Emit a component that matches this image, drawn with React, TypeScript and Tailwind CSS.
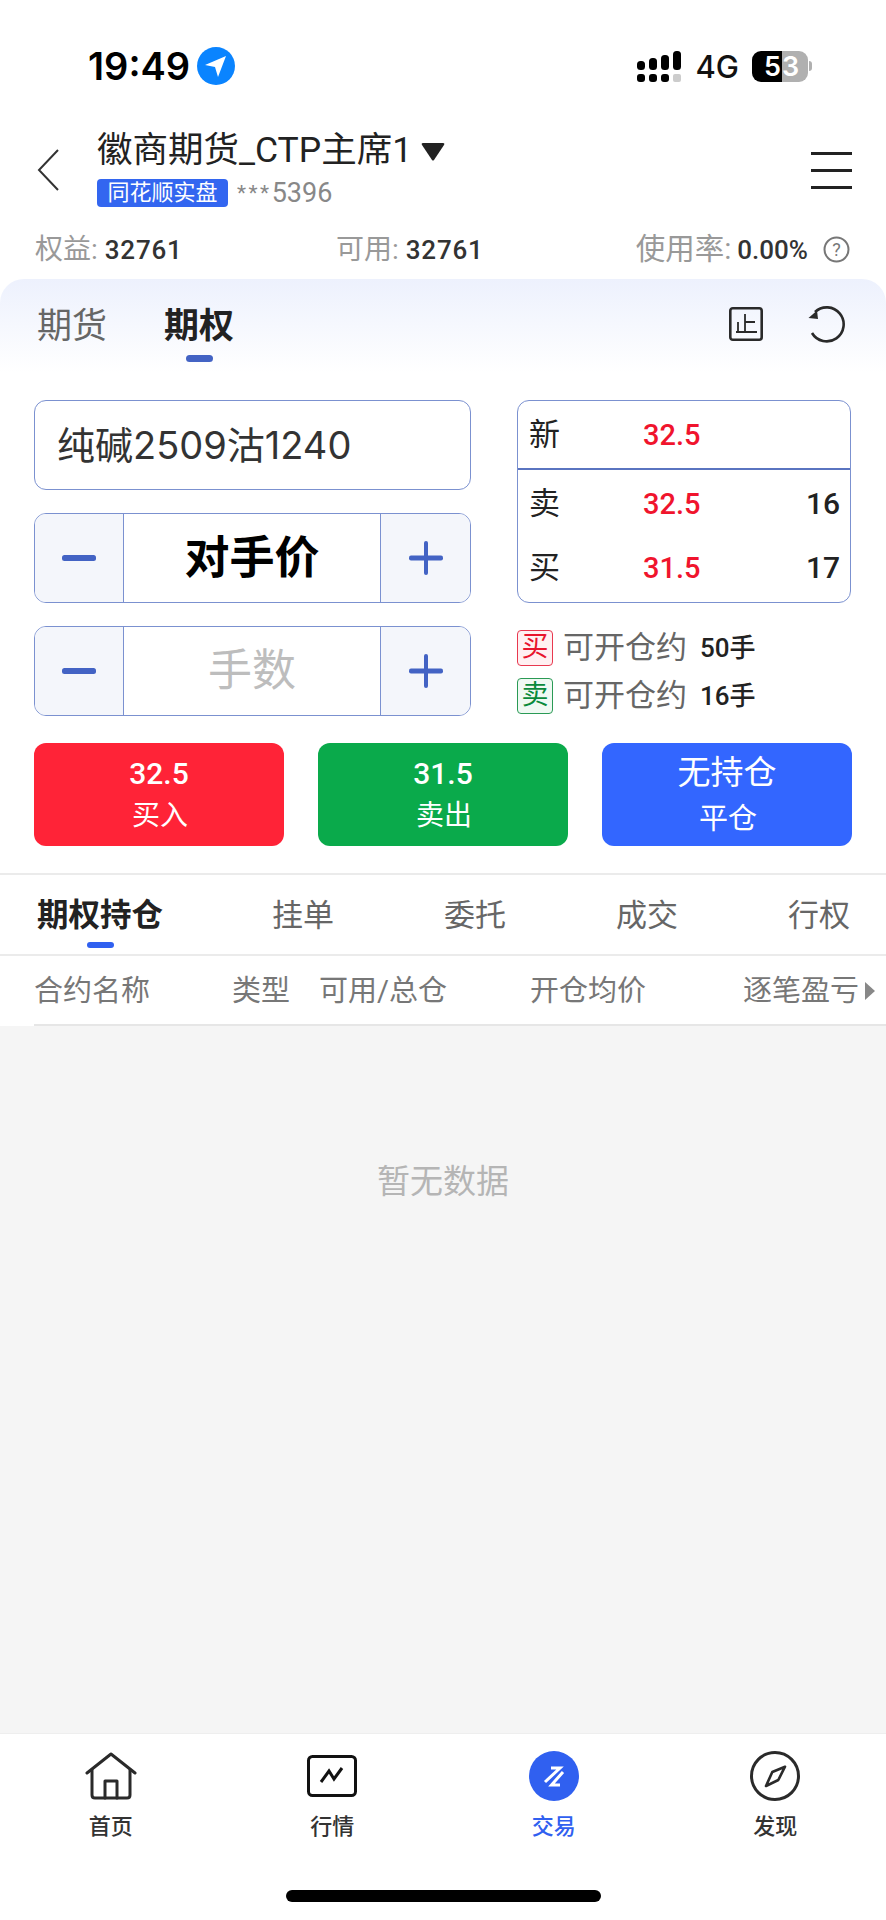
import React from "react";

const Minus = () => (
  <svg width="34" height="6" viewBox="0 0 34 6"><rect width="34" height="6" rx="2.5" fill="#4363c4" /></svg>
);
const Plus = () => (
  <svg width="34" height="34" viewBox="0 0 34 34">
    <rect y="14.5" width="34" height="5" rx="2" fill="#4363c4" />
    <rect x="15" width="4" height="34" rx="2" fill="#4363c4" />
  </svg>
);

function Stepper({ children }: { children: React.ReactNode }) {
  return (
    <div className="flex h-[90px] overflow-hidden rounded-[12px] border border-[#7b91d0]">
      <div className="flex w-[89px] items-center justify-center border-r border-[#7b91d0] bg-[#f4f6fb]"><Minus /></div>
      <div className="flex flex-1 items-center justify-center">{children}</div>
      <div className="flex w-[90px] items-center justify-center border-l border-[#7b91d0] bg-[#f4f6fb]"><Plus /></div>
    </div>
  );
}

function Quote({ label, price, qty }: { label: string; price: string; qty?: string }) {
  return (
    <div className="flex items-center pl-[11px] pr-[10px]">
      <span className="w-[114px] text-[31px] leading-[40px] text-[#222]">{label}</span>
      <span className="flex-1 text-[29px] font-medium leading-[40px] text-[#f0142d]">{price}</span>
      <span className="text-[30px] font-medium leading-[40px] text-[#222]">{qty}</span>
    </div>
  );
}

function Avail({ tag, cls, qty }: { tag: string; cls: string; qty: string }) {
  return (
    <div className="flex h-[37px] items-center">
      <span className={`flex h-[36px] w-[36px] items-center justify-center rounded-[4px] border text-[27px] leading-none ${cls}`}>{tag}</span>
      <span className="ml-[10px] text-[31px] leading-none text-[#666]">可开仓约</span>
      <span className="ml-[13px] text-[26px] font-medium leading-none text-[#222]">{qty}</span>
    </div>
  );
}

function TradeBtn({ top, bottom, cls, large }: { top: string; bottom: string; cls: string; large?: boolean }) {
  return (
    <div className={`flex h-[103px] w-[250px] flex-col items-center justify-center rounded-[12px] text-white ${large ? "gap-[4px]" : ""} ${cls}`}>
      <span className={large ? "text-[33px] leading-[44px]" : "text-[30px] font-medium leading-[42px]"}>{top}</span>
      <span className={large ? "pl-[2px] text-[29px] leading-[40px]" : "pl-[2px] pt-[1px] text-[28px] leading-[40px]"}>{bottom}</span>
    </div>
  );
}

function NavItem({ icon, label, active }: { icon: React.ReactNode; label: string; active?: boolean }) {
  return (
    <div className="flex w-[221.7px] flex-col items-center">
      <div className="flex h-[50px] items-center justify-center">{icon}</div>
      <span className={`mt-[11px] text-[22px] font-medium leading-[30px] ${active ? "text-[#3060f0]" : "text-[#333]"}`}>{label}</span>
    </div>
  );
}

export default function App() {
  return (
    <div className="flex h-[1920px] w-[886px] flex-col overflow-hidden bg-white [font-family:Roboto,'Noto_Sans_CJK_SC',sans-serif]">
      {/* status bar */}
      <div className="flex h-[100px] items-center justify-between pl-[88px] pr-[74px] pt-[32px]">
        <div className="flex items-center gap-[7px]">
          <span className="text-[38px] font-semibold leading-none text-black [font-family:Inter,sans-serif]">19:49</span>
          <svg width="38" height="38" viewBox="0 0 38 38">
            <circle cx="19" cy="19" r="19" fill="#0a84ff" />
            <path d="M29 9 L8 18 L18 20 L21 30 Z" fill="#fff" />
          </svg>
        </div>
        <div className="flex items-center">
          <svg width="44" height="31" viewBox="0 0 44 31">
            <rect x="0" y="10" width="8" height="9" rx="3.5" fill="#000" />
            <rect x="12" y="7" width="8" height="12" rx="3.5" fill="#000" />
            <rect x="24" y="4" width="8" height="15" rx="3.5" fill="#000" />
            <rect x="36" y="0" width="8" height="19" rx="3.5" fill="#000" />
            <rect x="0" y="23" width="8" height="8" rx="3" fill="#000" />
            <rect x="12" y="23" width="8" height="8" rx="3" fill="#000" />
            <rect x="24" y="23" width="8" height="8" rx="3" fill="#000" />
            <rect x="36" y="23" width="8" height="8" rx="2" fill="#ccc" />
          </svg>
          <span className="ml-[14px] text-[31px] font-medium leading-none text-[#111] [font-family:Inter,sans-serif]">4G</span>
          <div className="ml-[13px] flex h-[31px] w-[56px] overflow-hidden rounded-[9px] text-[27px] font-semibold leading-[31px] text-white [font-family:Inter,sans-serif]">
            <span className="w-[30px] bg-black pl-[12px]">5</span>
            <span className="flex-1 bg-[#b0b0b0]">3</span>
          </div>
          <div className="ml-[1px] h-[10px] w-[3px] rounded-r-full bg-[#b0b0b0]" />
        </div>
      </div>

      {/* header */}
      <div className="flex h-[122px] items-center pl-[37px] pr-[34px] pt-[18px]">
        <svg width="22" height="42" viewBox="0 0 22 42" fill="none" stroke="#333" strokeWidth="2">
          <path d="M21 1 L2 21 L21 41" />
        </svg>
        <div className="ml-[38px] flex-1 pb-[5px]">
          <div className="flex items-center">
            <span className="text-[35.5px] leading-[44px] text-[#222]">徽商期货_CTP主席1</span>
            <svg className="ml-[9px] mt-[3px]" width="24" height="19" viewBox="0 0 24 19"><path d="M2 1 H22 Q24 1 23 3 L13 18 Q12 19 11 18 L1 3 Q0 1 2 1 Z" fill="#222" /></svg>
          </div>
          <div className="mt-[7px] flex items-center">
            <span className="flex h-[28px] w-[131px] items-center justify-center rounded-[4px] bg-[#3366f0] text-[22px] leading-none text-white">同花顺实盘</span>
            <span className="ml-[9px] text-[21px] leading-none tracking-[2.5px] text-[#888]">***</span>
            <span className="text-[27px] leading-none text-[#888]">5396</span>
          </div>
        </div>
        <div className="flex w-[41px] flex-col gap-[14px]">
          <div className="h-[3px] bg-[#222]" />
          <div className="h-[3px] bg-[#222]" />
          <div className="h-[3px] bg-[#222]" />
        </div>
      </div>

      {/* stats */}
      <div className="flex h-[57px] items-center pl-[35px] pr-[36px] pb-[2px] text-[28px] leading-none text-[#999]">
        <div className="w-[301px]">权益:<span className="ml-[7px] text-[26px] font-medium tracking-[0.8px] text-[#333]">32761</span></div>
        <div className="flex-1">可用:<span className="ml-[7px] text-[26px] font-medium tracking-[0.8px] text-[#333]">32761</span></div>
        <div className="text-[29.5px]">使用率:<span className="ml-[6px] text-[26px] font-medium text-[#333]">0.00%</span></div>
        <svg className="ml-[15px]" width="27" height="27" viewBox="0 0 27 27" fill="none">
          <circle cx="13.5" cy="13.5" r="12" stroke="#777" strokeWidth="2" />
          <text x="13.5" y="20" textAnchor="middle" fontSize="18" fill="#777">?</text>
        </svg>
      </div>

      {/* product tabs */}
      <div className="flex h-[94px] items-start rounded-t-[24px] bg-gradient-to-b from-[#edf1fd] to-white pl-[37px] pr-[40px] pt-[25px]">
        <span className="text-[35px] leading-[46px] text-[#666]">期货</span>
        <div className="ml-[57px] flex flex-col items-center">
          <span className="text-[35px] font-semibold leading-[46px] text-[#222]">期权</span>
          <div className="mt-[5px] h-[7px] w-[27px] rounded-full bg-[#4363c4]" />
        </div>
        <div className="flex-1" />
        <svg className="mt-[3px]" width="34" height="34" viewBox="0 0 34 34" fill="none" stroke="#2a2a2a" strokeWidth="2.6">
          <rect x="1.3" y="1.3" width="31.4" height="31.4" rx="2.5" />
          <path d="M7 25 H28 M16 7 V25 M16 15 H26 M9 15 V25" strokeWidth="1.8" />
        </svg>
        <svg className="ml-[45px] mt-[1px]" width="38" height="38" viewBox="0 0 38 38" fill="none" stroke="#2a2a2a" strokeWidth="2.6">
          <path d="M7 7 A17 17 0 1 1 4 28" />
          <path d="M0.5 13 L9 5.5 L10 14 Z" strokeWidth="0" fill="#2a2a2a" />
        </svg>
      </div>

      {/* order form */}
      <div className="flex gap-[46px] px-[34px] pt-[27px]">
        <div className="flex w-[437px] flex-col gap-[23px]">
          <div className="flex h-[90px] items-center rounded-[12px] border border-[#7b91d0] pl-[22px] text-[38px] leading-none text-[#333] [font-family:Inter,'Noto_Sans_CJK_SC',sans-serif]">纯碱2509沽1240</div>
          <Stepper><span className="text-[45px] font-semibold leading-none text-black">对手价</span></Stepper>
          <Stepper><span className="text-[44px] leading-none text-[#bdbdbd]">手数</span></Stepper>
        </div>
        <div className="w-[334px]">
          <div className="h-[203px] rounded-[12px] border border-[#7b91d0]">
            <div className="flex h-[69px] flex-col justify-center border-b-2 border-[#5a74c0]">
              <Quote label="新" price="32.5" />
            </div>
            <div className="flex flex-col gap-[24px] pt-[14px]">
              <Quote label="卖" price="32.5" qty="16" />
              <Quote label="买" price="31.5" qty="17" />
            </div>
          </div>
          <div className="mt-[26px] flex flex-col gap-[11px]">
            <Avail tag="买" cls="border-[#e8384f] bg-[#fff0f2] text-[#e8142d]" qty="50手" />
            <Avail tag="卖" cls="border-[#2a9a55] bg-[#f0f9f3] text-[#0a8a3b]" qty="16手" />
          </div>
        </div>
      </div>

      {/* trade buttons */}
      <div className="flex justify-between px-[34px] pt-[27px]">
        <TradeBtn top="32.5" bottom="买入" cls="bg-[#ff2337]" />
        <TradeBtn top="31.5" bottom="卖出" cls="bg-[#0aaa4b]" />
        <TradeBtn top="无持仓" bottom="平仓" cls="bg-[#3366ff]" large />
      </div>

      {/* record tabs */}
      <div className="mt-[27px] flex h-[83px] border-y-2 border-[#ebebeb] pl-[37px] pr-[36px]">
        <div className="flex flex-col items-center pt-[20px]">
          <span className="text-[31.5px] font-semibold leading-[42px] text-[#222]">期权持仓</span>
          <div className="mt-[5px] h-[6px] w-[27px] rounded-full bg-[#3060f0]" />
        </div>
        <div className="flex flex-1 justify-between pl-[109px] pt-[20px] text-[31px] leading-[42px] text-[#666]">
          <span>挂单</span><span>委托</span><span>成交</span><span>行权</span>
        </div>
      </div>

      {/* table head */}
      <div className="flex h-[68px] items-center pl-[34px] pt-[2px] text-[29px] leading-none text-[#777]">
        <span className="w-[198px]">合约名称</span>
        <span className="w-[87px]">类型</span>
        <span className="w-[211px]">可用/总仓</span>
        <span className="w-[213px]">开仓均价</span>
        <span>逐笔盈亏</span>
        <svg className="ml-[6px]" width="10" height="18" viewBox="0 0 10 18"><path d="M0 0 L10 9 L0 18 Z" fill="#888" /></svg>
      </div>
      <div className="ml-[34px] h-[2px] bg-[#e6e6e6]" />

      {/* empty list */}
      <div className="flex flex-1 justify-center bg-[#f5f5f5] pt-[133px]">
        <span className="text-[33px] leading-[46px] text-[#b5b5b5]">暂无数据</span>
      </div>

      {/* bottom nav */}
      <div className="flex h-[187px] flex-col border-t border-[#eee]">
        <div className="flex pt-[17px]">
          <NavItem
            label="首页"
            icon={
              <svg width="52" height="48" viewBox="0 0 52 48" fill="none" stroke="#2a2a2a" strokeWidth="3" strokeLinejoin="round" strokeLinecap="round">
                <path d="M2 21 L26 2 L50 21" />
                <path d="M7 18 V43 Q7 46 10 46 H42 Q45 46 45 43 V18" />
                <path d="M20 46 V29 H32 V46" />
              </svg>
            }
          />
          <NavItem
            label="行情"
            icon={
              <svg width="50" height="42" viewBox="0 0 50 42" fill="none" stroke="#111" strokeWidth="3">
                <rect x="1.5" y="1.5" width="47" height="39" rx="4" />
                <path d="M14 27 L22 16 L27 24 L35 13" strokeWidth="3" />
              </svg>
            }
          />
          <NavItem
            active
            label="交易"
            icon={
              <svg width="50" height="50" viewBox="0 0 50 50">
                <circle cx="25" cy="25" r="25" fill="#3060f0" />
                <path d="M22 17 H31 L16 31 M34 21 L22.5 34 H31" fill="none" stroke="#fff" strokeWidth="3" />
              </svg>
            }
          />
          <NavItem
            label="发现"
            icon={
              <svg width="50" height="50" viewBox="0 0 50 50" fill="none">
                <circle cx="25" cy="25" r="23.5" stroke="#2a2a2a" strokeWidth="3" />
                <path d="M35 15.7 L22.3 21 L16 35 L28.3 29 Z" stroke="#2a2a2a" strokeWidth="2.6" strokeLinejoin="round" />
              </svg>
            }
          />
        </div>
        <div className="flex flex-1 justify-center pt-[48px]">
          <div className="h-[12px] w-[315px] rounded-full bg-black" />
        </div>
      </div>
    </div>
  );
}
